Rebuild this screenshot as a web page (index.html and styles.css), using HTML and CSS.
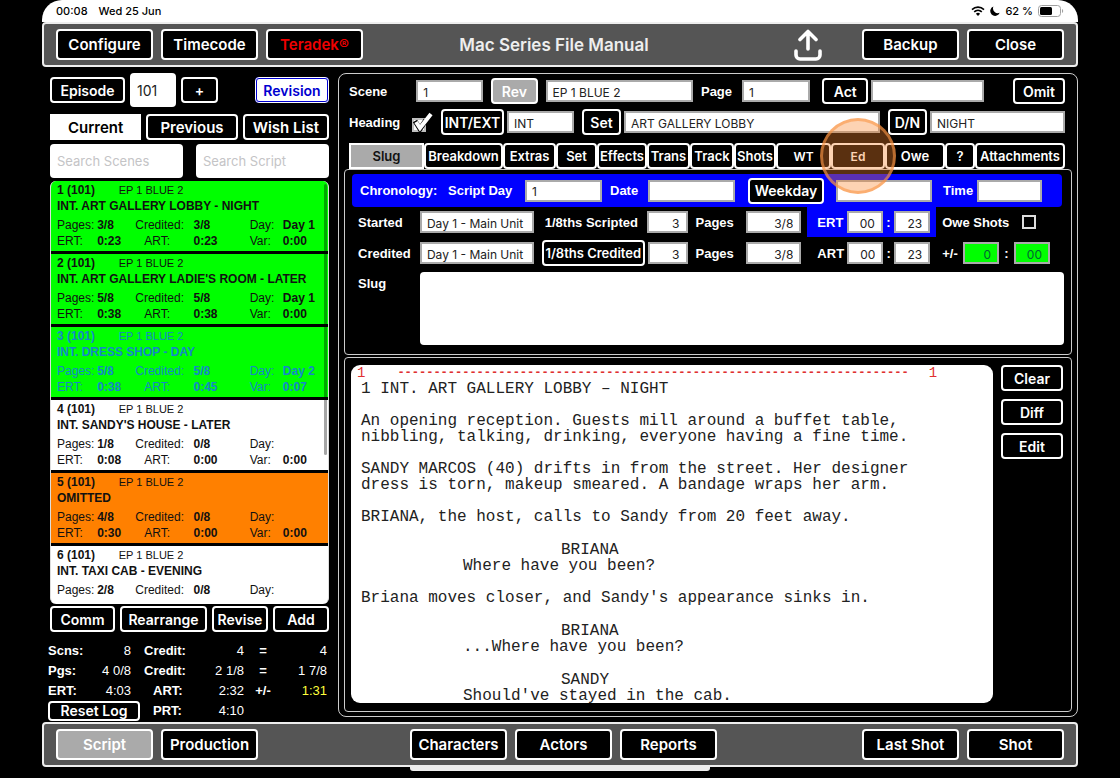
FILE: index.html
```html
<!DOCTYPE html>
<html lang="en">

<head>
    <meta charset="UTF-8">
    <meta name="viewport" content="width=device-width, initial-scale=1.0">
    <title>Mac Series File Manual</title>
    <link rel="stylesheet" href="styles.css">
</head>

<body>
    <div class="app">
        <div class="status-bar">
            <span>00:08</span>
            <span class="date">Wed 25 Jun</span>
            <div class="status-icons">
                <svg width="14" height="10" viewBox="0 0 14 10">
                    <path d="M1 3.6a8.6 8.6 0 0 1 12 0M3.2 5.9a5.5 5.5 0 0 1 7.6 0" fill="none" stroke="#000" stroke-width="1.6" />
                    <path d="M7 10 4.9 7.8a3 3 0 0 1 4.2 0z" />
                </svg>
                <svg width="10" height="10" viewBox="0 0 10 10">
                    <path d="M3.4.4a4.9 4.9 0 1 0 6.3 6.4A4.9 4.9 0 0 1 3.4.4z" />
                </svg>
                <span>62 %</span>
                <svg class="battery" width="26" height="12" viewBox="0 0 26 12">
                    <rect x=".5" y=".5" width="22" height="11" rx="3" fill="none" stroke="#a0a0a0" />
                    <rect x="2" y="2" width="12" height="8" rx="1.5" />
                    <path d="M24 4c1.6.5 1.6 3.5 0 4z" fill="#a0a0a0" />
                </svg>
            </div>
        </div>

        <header class="toolbar">
            <div class="toolbar-group">
                <button class="btn">Configure</button>
                <button class="btn">Timecode</button>
                <button class="btn btn-red">Teradek®</button>
            </div>
            <h1>Mac Series File Manual</h1>
            <div class="toolbar-group toolbar-end">
                <button class="share" aria-label="Share">
                    <svg width="28" height="32" viewBox="0 0 28 32" fill="none" stroke="#fff" stroke-width="3.6" stroke-linecap="round" stroke-linejoin="round">
                        <path d="M14 20V3M6 10.5 14 2.5l8 8" />
                        <path d="M2 22v4a4 4 0 0 0 4 4h16a4 4 0 0 0 4-4v-4" />
                    </svg>
                </button>
                <button class="btn">Backup</button>
                <button class="btn">Close</button>
            </div>
        </header>

        <main>
            <aside class="sidebar">
                <div class="episode-row">
                    <button class="btn">Episode</button>
                    <input class="episode" type="text" value="101" aria-label="Episode number">
                    <button class="btn">+</button>
                    <button class="btn btn-revision">Revision</button>
                </div>
                <div class="list-tabs">
                    <button class="btn btn-current">Current</button>
                    <button class="btn">Previous</button>
                    <button class="btn">Wish List</button>
                </div>
                <div class="search-row">
                    <input type="text" placeholder="Search Scenes" aria-label="Search Scenes">
                    <input type="text" placeholder="Search Script" aria-label="Search Script">
                </div>

                <div class="scene-list">
                    <article class="scene green">
                        <div class="scene-id"><b>1 (101)</b><span>EP 1 BLUE 2</span></div>
                        <h2>INT. ART GALLERY LOBBY - NIGHT</h2>
                        <div class="scene-data">
                            <span>Pages:</span><b>3/8</b><span>Credited:</span><b>3/8</b><span>Day:</span><b>Day 1</b>
                            <span>ERT:</span><b>0:23</b><span class="art">ART:</span><b>0:23</b><span>Var:</span><b>0:00</b>
                        </div>
                    </article>
                    <article class="scene green">
                        <div class="scene-id"><b>2 (101)</b><span>EP 1 BLUE 2</span></div>
                        <h2>INT. ART GALLERY LADIE'S ROOM - LATER</h2>
                        <div class="scene-data">
                            <span>Pages:</span><b>5/8</b><span>Credited:</span><b>5/8</b><span>Day:</span><b>Day 1</b>
                            <span>ERT:</span><b>0:38</b><span class="art">ART:</span><b>0:38</b><span>Var:</span><b>0:00</b>
                        </div>
                    </article>
                    <article class="scene green selected">
                        <div class="scene-id"><b>3 (101)</b><span>EP 1 BLUE 2</span></div>
                        <h2>INT. DRESS SHOP - DAY</h2>
                        <div class="scene-data">
                            <span>Pages:</span><b>5/8</b><span>Credited:</span><b>5/8</b><span>Day:</span><b>Day 2</b>
                            <span>ERT:</span><b>0:38</b><span class="art">ART:</span><b>0:45</b><span>Var:</span><b>0:07</b>
                        </div>
                    </article>
                    <article class="scene">
                        <div class="scene-id"><b>4 (101)</b><span>EP 1 BLUE 2</span></div>
                        <h2>INT. SANDY'S HOUSE - LATER</h2>
                        <div class="scene-data">
                            <span>Pages:</span><b>1/8</b><span>Credited:</span><b>0/8</b><span>Day:</span><b></b>
                            <span>ERT:</span><b>0:08</b><span class="art">ART:</span><b>0:00</b><span>Var:</span><b>0:00</b>
                        </div>
                    </article>
                    <article class="scene omitted">
                        <div class="scene-id"><b>5 (101)</b><span>EP 1 BLUE 2</span></div>
                        <h2>OMITTED</h2>
                        <div class="scene-data">
                            <span>Pages:</span><b>4/8</b><span>Credited:</span><b>0/8</b><span>Day:</span><b></b>
                            <span>ERT:</span><b>0:30</b><span class="art">ART:</span><b>0:00</b><span>Var:</span><b>0:00</b>
                        </div>
                    </article>
                    <article class="scene">
                        <div class="scene-id"><b>6 (101)</b><span>EP 1 BLUE 2</span></div>
                        <h2>INT. TAXI CAB - EVENING</h2>
                        <div class="scene-data">
                            <span>Pages:</span><b>2/8</b><span>Credited:</span><b>0/8</b><span>Day:</span><b></b>
                        </div>
                    </article>
                    <div class="scroll-thumb"></div>
                </div>

                <div class="list-actions">
                    <button class="btn">Comm</button>
                    <button class="btn">Rearrange</button>
                    <button class="btn">Revise</button>
                    <button class="btn">Add</button>
                </div>

                <div class="totals">
                    <b>Scns:</b><span class="count">8</span><b class="credit">Credit:</b><span>4</span><b class="sign">=</b><span>4</span>
                    <b>Pgs:</b><span class="count">4 0/8</span><b class="credit">Credit:</b><span>2 1/8</span><b class="sign">=</b><span>1 7/8</span>
                    <b>ERT:</b><span class="count">4:03</span><b class="inset">ART:</b><span>2:32</span><b class="sign">+/-</b><span class="yellow">1:31</span>
                    <button class="btn reset">Reset Log</button><b class="inset">PRT:</b><span>4:10</span>
                </div>
            </aside>

            <section class="detail">
                <div class="detail-head">
                    <div class="row row-scene">
                        <label for="scene">Scene</label>
                        <input id="scene" type="text" value="1">
                        <button class="btn btn-grey">Rev</button>
                        <input type="text" value="EP 1 BLUE 2" aria-label="Revision name">
                        <label for="page">Page</label>
                        <input id="page" type="text" value="1">
                        <div class="field act">
                            <button class="btn">Act</button>
                            <input type="text" aria-label="Act">
                        </div>
                        <button class="btn omit">Omit</button>
                    </div>

                    <div class="row row-heading">
                        <div class="field">
                            <label for="heading">Heading</label>
                            <input id="heading" class="check-big" type="checkbox" checked>
                        </div>
                        <div class="field int-ext">
                            <button class="btn">INT/EXT</button>
                            <input type="text" value="INT" aria-label="INT/EXT">
                        </div>
                        <div class="field set">
                            <button class="btn">Set</button>
                            <input type="text" value="ART GALLERY LOBBY" aria-label="Set">
                        </div>
                        <div class="field day-night">
                            <button class="btn">D/N</button>
                            <input type="text" value="NIGHT" aria-label="Day or night">
                        </div>
                    </div>

                    <nav class="tabs">
                        <button class="btn btn-slug">Slug</button>
                        <button class="btn">Breakdown</button>
                        <button class="btn">Extras</button>
                        <button class="btn">Set</button>
                        <button class="btn">Effects</button>
                        <button class="btn">Trans</button>
                        <button class="btn">Track</button>
                        <button class="btn">Shots</button>
                        <button class="btn small">WT</button>
                        <button class="btn small tapped">Ed</button>
                        <button class="btn">Owe</button>
                        <button class="btn">?</button>
                        <button class="btn">Attachments</button>
                    </nav>
                </div>

                <div class="panel slug-panel">
                    <div class="chronology">
                        <b>Chronology:</b>
                        <div class="field">
                            <label for="script-day">Script Day</label>
                            <input id="script-day" class="w-day" type="text" value="1">
                        </div>
                        <div class="field">
                            <label for="date">Date</label>
                            <input id="date" class="w-date" type="text">
                        </div>
                        <div class="field weekday">
                            <button class="btn">Weekday</button>
                            <input type="text" aria-label="Weekday">
                        </div>
                        <div class="field">
                            <label for="time">Time</label>
                            <input id="time" class="w-time" type="text">
                        </div>
                    </div>

                    <div class="timing">
                        <label for="started">Started</label>
                        <input id="started" type="text" value="Day 1 - Main Unit">
                        <div class="field eighths">
                            <label for="scripted">1/8ths Scripted</label>
                            <input id="scripted" class="num" type="text" value="3">
                        </div>
                        <div class="field">
                            <label for="pages-scripted">Pages</label>
                            <input id="pages-scripted" class="num w-pages" type="text" value="3/8">
                        </div>
                        <div class="field clock ert">
                            <label for="ert-min">ERT</label>
                            <input id="ert-min" class="num" type="text" value="00">
                            <b>:</b>
                            <input class="num" type="text" value="23" aria-label="ERT seconds">
                        </div>
                        <div class="field owe">
                            <label for="owe-shots">Owe Shots</label>
                            <input id="owe-shots" class="check-small" type="checkbox">
                        </div>

                        <label for="credited">Credited</label>
                        <input id="credited" type="text" value="Day 1 - Main Unit">
                        <div class="field eighths">
                            <button class="btn">1/8ths Credited</button>
                            <input class="num" type="text" value="3" aria-label="1/8ths Credited">
                        </div>
                        <div class="field">
                            <label for="pages-credited">Pages</label>
                            <input id="pages-credited" class="num w-pages" type="text" value="3/8">
                        </div>
                        <div class="field clock">
                            <label for="art-min">ART</label>
                            <input id="art-min" class="num" type="text" value="00">
                            <b>:</b>
                            <input class="num" type="text" value="23" aria-label="ART seconds">
                        </div>
                        <div class="field variance">
                            <label for="var-min">+/-</label>
                            <input id="var-min" class="num" type="text" value="0">
                            <b>:</b>
                            <input class="num" type="text" value="00" aria-label="Variance seconds">
                        </div>
                    </div>

                    <div class="slug">
                        <label for="slug">Slug</label>
                        <textarea id="slug"></textarea>
                    </div>
                </div>

                <div class="panel script-panel">
                    <div class="script">
                        <div class="page-break"><span>1</span><i>-----------------------------------------------------------------------</i><span>1</span></div>
                        <div class="script-text">
                            <p>1 INT. ART GALLERY LOBBY – NIGHT</p>
                            <p>An opening reception. Guests mill around a buffet table,<br>nibbling, talking, drinking, everyone having a fine time.</p>
                            <p>SANDY MARCOS (40) drifts in from the street. Her designer<br>dress is torn, makeup smeared. A bandage wraps her arm.</p>
                            <p>BRIANA, the host, calls to Sandy from 20 feet away.</p>
                            <p class="dialogue"><span>BRIANA</span>Where have you been?</p>
                            <p>Briana moves closer, and Sandy's appearance sinks in.</p>
                            <p class="dialogue"><span>BRIANA</span>...Where have you been?</p>
                            <p class="dialogue"><span>SANDY</span>Should've stayed in the cab.</p>
                        </div>
                    </div>
                    <div class="script-actions">
                        <button class="btn">Clear</button>
                        <button class="btn">Diff</button>
                        <button class="btn">Edit</button>
                    </div>
                </div>
            </section>
        </main>

        <footer class="toolbar">
            <div class="toolbar-group">
                <button class="btn btn-grey">Script</button>
                <button class="btn">Production</button>
            </div>
            <div class="toolbar-group toolbar-middle">
                <button class="btn">Characters</button>
                <button class="btn">Actors</button>
                <button class="btn">Reports</button>
            </div>
            <div class="toolbar-group toolbar-end">
                <button class="btn">Last Shot</button>
                <button class="btn">Shot</button>
            </div>
        </footer>
        <div class="home-bar"></div>
    </div>
</body>

</html>
```
FILE: styles.css
```css
/* Global Styles */
* {
    box-sizing: border-box;
}

body {
    margin: 0;
    background-color: #000;
    color: #fff;
    font-family: "Liberation Sans", Arial, sans-serif;
    font-size: 13px;
}

.app {
    display: flex;
    flex-direction: column;
    height: 100vh;
    min-height: 700px;
    padding: 0 42px;
}

label,
b {
    font-weight: bold;
    white-space: nowrap;
}

input,
textarea {
    min-width: 0;
    width: 100%;
    border: 2px solid #aaa;
    border-radius: 0;
    background-color: #fff;
    color: #222;
    font-family: Inter, sans-serif;
    font-size: 12px;
}

input {
    height: 22px;
    padding: 2px 5px 0;
}

.num {
    padding: 2px 6px 0;
    text-align: right;
}

/* Buttons */
.btn {
    height: 26px;
    padding: 0;
    border: 2px solid #fff;
    border-radius: 4px;
    background-color: #000;
    color: #fff;
    font-family: Inter, sans-serif;
    font-size: 14px;
    font-weight: 600;
    white-space: nowrap;
}

.btn-red {
    color: #f00000;
}

.btn-grey {
    background-color: #aaa;
}

.btn-revision {
    border-color: #0000d0;
    background-color: #fff;
    color: #0000d0;
    outline: 1px solid #fff;
    outline-offset: -1px;
}

.btn-current {
    border-radius: 0;
    background-color: #fff;
    color: #000;
}

/* Status bar */
.status-bar {
    display: flex;
    align-items: center;
    height: 22px;
    padding: 0 14px;
    border-radius: 20px 20px 0 0;
    background-color: #fff;
    color: #000;
    font-family: Inter, sans-serif;
    font-size: 11px;
    font-weight: 500;
}

.date {
    margin-left: 11px;
}

.status-icons {
    display: flex;
    align-items: center;
    gap: 5px;
    margin-left: auto;
}

/* Toolbars */
.toolbar {
    display: grid;
    grid-template-columns: 1fr auto 1fr;
    align-items: center;
    height: 45px;
    padding: 0 12px;
    border: 2px solid #eee;
    border-radius: 4px;
    background-color: #555;
}

.toolbar-group {
    display: flex;
    gap: 8px;
}

.toolbar-middle {
    margin-left: 7px;
}

.toolbar-end {
    justify-content: flex-end;
}

.toolbar .btn {
    width: 97px;
    height: 31px;
    font-size: 15px;
}

.toolbar h1 {
    margin: 0 12px 0 0;
    color: #eee;
    font-family: Inter, sans-serif;
    font-size: 17px;
    font-weight: 600;
}

.share {
    height: 32px;
    margin-right: 32px;
    padding: 0;
    border: none;
    background: none;
}

.home-bar {
    align-self: center;
    width: 29%;
    height: 4px;
    margin-bottom: 7px;
    border-radius: 0 0 3px 3px;
    background-color: #eee;
}

main {
    display: grid;
    grid-template-columns: 281fr 740fr;
    gap: 9px;
    flex: 1;
    min-height: 0;
    padding: 6px 0 1px 6px;
}

/* Sidebar */
.sidebar {
    display: flex;
    flex-direction: column;
    min-height: 0;
    padding-left: 2px;
}

.episode-row {
    display: grid;
    grid-template-columns: 75fr 46fr 37fr 27fr 74fr;
    gap: 5px;
    align-items: center;
    height: 34px;
}

.btn-revision {
    grid-column: 5;
}

.sidebar input {
    height: 34px;
    padding: 0 7px;
    border: none;
    border-radius: 4px;
    font-size: 13px;
}

.sidebar .episode {
    font-size: 14px;
}

.sidebar ::placeholder {
    color: #c4c4c6;
}

.list-tabs {
    display: grid;
    grid-template-columns: 91fr 91fr 86fr;
    gap: 5px;
    margin: 7px 0 4px;
}

.list-tabs .btn {
    font-size: 15px;
}

.search-row {
    display: grid;
    grid-template-columns: 1fr 1fr;
    gap: 13px;
}

.scene-list {
    position: relative;
    flex: 1;
    min-height: 0;
    margin-top: 3px;
    overflow: hidden;
    border: solid #ddd;
    border-width: 0 1px;
    border-radius: 6px;
    background-color: #fff;
    color: #111;
    font-size: 12px;
    line-height: 16px;
}

.scene {
    height: 73px;
    padding: 1px 0 0 6px;
    border-bottom: 3px solid #000;
}

.scene:last-of-type {
    border-bottom: none;
}

.scene.green {
    background-color: #00ff00;
}

.scene.selected {
    color: #1488c8;
}

.scene.omitted {
    background-color: #ff8000;
}

.scene h2 {
    margin: 0;
    font-size: 12px;
    white-space: nowrap;
}

.scene-id {
    display: grid;
    grid-template-columns: 62fr 210fr;
}

.scene-id span {
    font-size: 11px;
}

.scene-data {
    display: grid;
    grid-template-columns: 40fr 38fr 58fr 56fr 33fr 45fr;
    margin-top: 3px;
}

.art {
    padding-left: 9px;
}

.scroll-thumb {
    position: absolute;
    top: 3px;
    right: 1px;
    width: 3px;
    height: 64%;
    border-radius: 2px;
    background-color: rgba(0, 0, 0, 0.35);
}

.list-actions {
    display: grid;
    grid-template-columns: 65fr 87fr 56fr 56fr;
    gap: 5px;
    margin-top: 2px;
}

/* Totals */
.totals {
    display: grid;
    grid-template-columns: 42fr 50fr 61fr 43fr 38fr 45fr;
    align-items: center;
    margin: 9px 2px 0 -2px;
    line-height: 20px;
}

.totals span {
    text-align: right;
    white-space: nowrap;
}

.totals .count {
    padding-right: 9px;
}

.credit {
    padding-left: 4px;
}

.inset {
    padding-left: 13px;
}

.sign {
    text-align: center;
}

.totals .yellow {
    color: #ffff3c;
}

.reset {
    grid-column: span 2;
    height: 20px;
    line-height: 16px;
}

/* Detail panel */
.detail {
    display: flex;
    flex-direction: column;
    min-height: 0;
    margin-bottom: 4px;
    padding: 4px 5px;
    border: 1px solid #ccc;
    border-radius: 8px;
}

.detail-head {
    padding: 0 7px 0 5px;
}

.row {
    display: grid;
    gap: 8px;
    align-items: center;
    margin-bottom: 5px;
}

.row-scene {
    grid-template-columns: 59fr 67fr 46fr 147fr 33fr 68fr 165fr 73fr;
}

.row-heading {
    grid-template-columns: 84fr 133fr 298fr 177fr;
    margin-bottom: 8px;
}

.field {
    display: flex;
    align-items: center;
    justify-content: space-between;
    gap: 3px;
    min-width: 0;
}

.field .btn {
    flex-shrink: 0;
}

.act {
    padding-left: 4px;
}

.act .btn {
    width: 46px;
}

.omit {
    justify-self: end;
    width: 52px;
}

.int-ext .btn {
    width: 63px;
}

.set .btn,
.day-night .btn {
    width: 39px;
}

input[type="checkbox"] {
    flex-shrink: 0;
    margin: 0;
    padding: 0;
    border: none;
    appearance: none;
}

.check-big {
    width: 22px;
    height: 22px;
    background: url('data:image/svg+xml,<svg xmlns="http://www.w3.org/2000/svg" viewBox="0 0 22 22"><path d="M2 8h12v12H2z" fill="white" stroke="silver" stroke-width="2"/><path d="M4 10l5 8L15 9" fill="none" stroke="black" stroke-width="5"/><path d="M5 11l4 6L20 3" fill="none" stroke="white" stroke-width="4"/></svg>') no-repeat;
}

.check-small.check-small {
    width: 14px;
    height: 14px;
    border: 2px solid #ddd;
    background-color: #000;
}

/* Tabs */
.tabs {
    display: grid;
    grid-template-columns: 75fr 79fr 53fr 41fr 50fr 43fr 44fr 42fr 55fr 54fr 60fr 30fr 90fr;
}

.tabs .btn {
    min-width: 0;
    font-size: 13px;
}

.tabs .btn-slug {
    border-radius: 0;
    background-color: #aaa;
    color: #111;
}

.tabs .small {
    font-size: 12px;
}

.tapped {
    position: relative;
}

.tapped::after {
    content: "";
    position: absolute;
    top: 50%;
    left: 50%;
    z-index: 2;
    width: 70px;
    height: 70px;
    transform: translate(-50%, -50%);
    border: 3px solid rgba(250, 150, 70, 0.6);
    border-radius: 50%;
    background-color: rgba(250, 133, 44, 0.36);
}

.panel {
    border: 1px solid #ccc;
    border-radius: 4px;
}

/* Slug panel */
.slug-panel {
    padding: 4px 7px 9px;
}

.chronology {
    display: grid;
    grid-template-columns: 80fr 154fr 125fr 192fr 99fr;
    gap: 8px;
    align-items: center;
    height: 33px;
    margin-right: 2px;
    padding: 0 20px 0 8px;
    border-radius: 4px;
    background-color: #0000ff;
}

.w-day {
    width: 77px;
}

.w-date {
    width: 87px;
}

.w-time {
    width: 65px;
}

.weekday {
    gap: 12px;
    padding: 0 3px 0 5px;
}

.weekday .btn {
    width: 76px;
}

.timing {
    display: grid;
    grid-template-columns: 56fr 114fr 150fr 106fr 129fr 122fr;
    grid-template-rows: 30px 32px;
    column-gap: 6px;
    align-items: center;
    padding-left: 6px;
}

.eighths {
    padding: 0 2px;
}

.eighths .num {
    width: 41px;
}

.eighths label {
    padding-left: 3px;
}

.eighths .btn {
    width: 103px;
    font-size: 13px;
}

.field .w-pages {
    width: 55px;
}

.clock {
    height: 30px;
    padding: 0 6px 0 10px;
}

.clock .num,
.variance .num {
    flex-shrink: 0;
    width: 36px;
}

.ert {
    background-color: #0000ff;
}

.owe {
    padding-right: 28px;
}

.variance {
    padding-right: 14px;
}

.variance input {
    background-color: #00ff00;
    color: #063;
}

.slug {
    display: grid;
    grid-template-columns: 56fr 644fr;
    gap: 6px;
    margin-top: 3px;
    padding-left: 6px;
}

.slug label {
    margin-top: 4px;
}

.slug textarea {
    display: block;
    height: 73px;
    border: none;
    border-radius: 4px;
    resize: none;
}

/* Script panel */
.script-panel {
    display: flex;
    gap: 8px;
    flex: 1;
    min-height: 0;
    margin-top: 2px;
    padding: 7px 8px 8px 6px;
}

.script {
    flex: 1;
    overflow: hidden;
    border-radius: 9px;
    background-color: #fff;
    color: #222;
    font-family: "Liberation Mono", "Courier New", monospace;
    font-size: 16px;
    line-height: 16px;
}

.page-break {
    display: flex;
    gap: 32px;
    padding-left: 6px;
    color: #e03030;
    font-size: 14px;
}

.page-break i {
    margin-right: -12px;
    font-size: 12px;
    font-style: normal;
    font-weight: bold;
}

.script-text {
    padding-left: 10px;
}

.script-text p {
    margin: 0 0 16px;
    white-space: nowrap;
}

.script-text .dialogue {
    margin-top: 17px;
    padding-left: 102px;
}

.dialogue span {
    display: block;
    padding-left: 98px;
}

.script-actions {
    display: flex;
    flex-direction: column;
    gap: 8px;
    width: 62px;
}
```
